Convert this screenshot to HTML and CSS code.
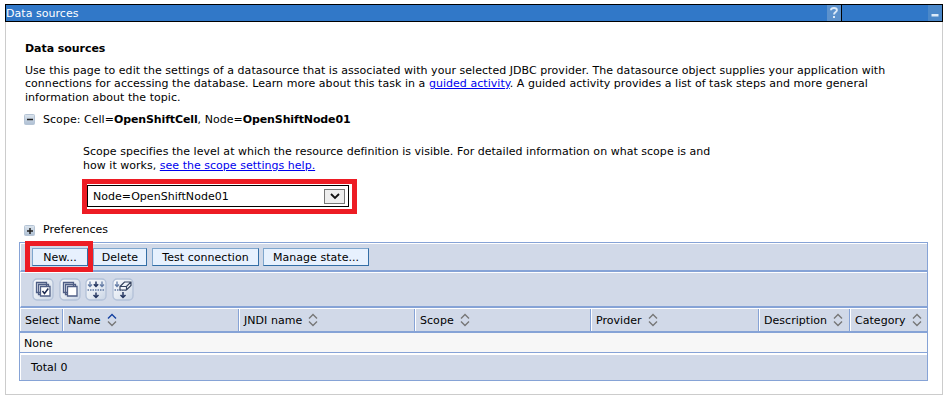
FILE: index.html
```html
<!DOCTYPE html>
<html lang="en">
<head>
<meta charset="utf-8">
<title>Data sources</title>
<link rel="stylesheet" href="styles.css">
</head>
<body>
<svg class="defs" aria-hidden="true">
  <defs>
    <linearGradient id="tile" x1="0" y1="0" x2="1" y2="1"><stop offset="0" stop-color="#fbfcfe"/><stop offset=".55" stop-color="#e4eaf2"/><stop offset="1" stop-color="#c8d4e5"/></linearGradient>
    <linearGradient id="box" x1="0" y1="0" x2="0" y2="1"><stop offset="0" stop-color="#dce5ee"/><stop offset="1" stop-color="#aebfd3"/></linearGradient>
    <g id="frame"><rect x="1" y="1" width="20" height="21" rx="4" fill="url(#tile)" stroke="#b3c1d8" stroke-width="1.3"/></g>
    <symbol id="sort" viewBox="0 0 10 14"><path class="up" d="M1 5.500 5 1.500l4 4"/><path class="down" d="m1 8.500 4 4 4-4"/></symbol>
  </defs>
</svg>
<main class="portlet">
  <header class="bar">
    <span class="bar-title">Data sources</span>
    <svg class="bar-icon" width="14" height="16" viewBox="0 0 14 16"><rect width="14" height="16" fill="#5c92cd"/><path d="M4 5.200C4 3.400 5.400 3 7 3s2.900.6 2.900 2.200C9.900 7 7 7 7 9.600" fill="none" stroke="#dceaf8" stroke-width="1.900"/><rect x="6" y="11" width="2" height="2" fill="#dceaf8"/></svg>
    <span class="bar-end"><svg class="bar-icon" width="14" height="16" viewBox="0 0 14 16"><rect width="14" height="16" fill="#4b88c9"/><rect x="3.500" y="9" width="7" height="2.500" fill="#dceaf8"/></svg></span>
  </header>
  <section class="content">
    <h1>Data sources</h1>
    <p class="intro">Use this page to edit the settings of a datasource that is associated with your selected JDBC provider. The datasource object supplies your application with<br>connections for accessing the database. Learn more about this task in a <a href="#">guided activity</a>. A guided activity provides a list of task steps and more general<br>information about the topic.</p>
    <div class="toggle">
      <svg width="11" height="11" viewBox="0 0 11 11"><rect x=".5" y=".5" width="10" height="10" rx="1" fill="url(#box)" stroke="#b5c4d5"/><path d="M3 5.500h6" stroke="#222" stroke-width="1.500"/></svg>
      <span>Scope: Cell=<b>OpenShiftCell</b>, Node=<b>OpenShiftNode01</b></span>
    </div>
    <p class="scope-help">Scope specifies the level at which the resource definition is visible. For detailed information on what scope is and<br>how it works, <a href="#">see the scope settings help.</a></p>
    <div class="select-mark"><div class="select"><span>Node=OpenShiftNode01</span><span class="drop"><svg width="10" height="7" viewBox="0 0 10 7"><path d="m1 1 4 4 4-4" fill="none" stroke="#111" stroke-width="1.800"/></svg></span></div></div>
    <div class="toggle prefs">
      <svg width="11" height="11" viewBox="0 0 11 11"><rect x=".5" y=".5" width="10" height="10" rx="1" fill="url(#box)" stroke="#b5c4d5"/><path d="M3 6h6M6 3v6" stroke="#222" stroke-width="1.500"/></svg>
      <span>Preferences</span>
    </div>
    <div class="table">
      <div class="row buttons">
        <button class="b-new">New...</button><button class="b-delete">Delete</button><button class="b-test">Test connection</button><button class="b-state">Manage state...</button>
        <span class="new-mark"></span>
      </div>
      <div class="row icons">
        <svg viewBox="0 0 22 23"><use href="#frame"/><g fill="#e8edf5" stroke="#4f5e85" stroke-width="1.300"><path d="M4.500 4.500h10v10h-10zM6.500 6.500h10v10h-10z"/><path d="M8.500 8.500h9.500v9.500h-9.500z" fill="#fff"/></g><path d="m10.500 13 2 2.500 3.800-5" fill="none" stroke="#1c2950" stroke-width="1.500"/></svg>
        <svg viewBox="0 0 22 23"><use href="#frame"/><g fill="#e8edf5" stroke="#4f5e85" stroke-width="1.300"><path d="M4.500 4.500h10v10h-10zM6.500 6.500h10v10h-10z"/><path d="M8.500 8.500h9.500v9.500h-9.500z" fill="#fff"/></g></svg>
        <svg viewBox="0 0 22 23"><use href="#frame"/><g fill="none" stroke="#637ba5" stroke-width="1.300"><path d="M5 3.500v5M3 6.500l2 2 2-2M17 3.500v5M15 6.500l2 2 2-2"/><path d="M2.500 12h17" stroke-dasharray="1.500 1"/><path d="M11 3.500v5M8.800 6.300l2.200 2.200 2.200-2.200M11 14.500v5M8.500 17l2.500 2.500 2.500-2.500" stroke="#263761" stroke-width="1.500"/></g></svg>
        <svg viewBox="0 0 22 23"><use href="#frame"/><g fill="none" stroke="#637ba5" stroke-width="1.300"><path d="M5 3.500v5M3 6.500l2 2 2-2"/><path d="M2.500 12h12" stroke-dasharray="1.500 1"/><path d="M11 14v5.500M8.500 17l2.500 2.500 2.500-2.500" stroke="#263761" stroke-width="1.500"/><path d="m8 8.500 4.500-4.500h6.500v3.500L14.500 12H8zM8 8.500h6.500L19 4M14.500 8.500V12" fill="#f4f6fa" stroke="#35435f" stroke-width="1.200"/></g></svg>
      </div>
      <div class="row head">
        <div>Select</div>
        <div>Name<svg class="sort asc"><use href="#sort"/></svg></div>
        <div>JNDI name<svg class="sort"><use href="#sort"/></svg></div>
        <div>Scope<svg class="sort"><use href="#sort"/></svg></div>
        <div>Provider<svg class="sort"><use href="#sort"/></svg></div>
        <div>Description<svg class="sort"><use href="#sort"/></svg></div>
        <div>Category<svg class="sort"><use href="#sort"/></svg></div>
      </div>
      <div class="none">None</div>
      <div class="row total">Total 0</div>
    </div>
  </section>
</main>
</body>
</html>
```
FILE: styles.css
```css
* { box-sizing: border-box; }
body { margin: 0; padding: 4px 5px 0; background: #fff; color: #000; font: 11px/13.4px Verdana, "DejaVu Sans", sans-serif; letter-spacing: .04px; white-space: nowrap; }
svg { display: block; flex: none; }
.defs { position: absolute; width: 0; height: 0; }
.portlet { width: 938px; height: 391px; border: 1px solid #ccc; border-top: 0; }
.bar { display: flex; align-items: stretch; height: 18px; margin: 0 -1px; border: 1px solid #000; background: #3178c8; color: #fff; }
.bar-title { flex: 1; line-height: 17px; }
.bar-end { display: flex; justify-content: flex-end; width: 101px; border-left: 1px solid #000; }
.content { padding: 20px 14px 0 13px; }
h1 { margin: 0 0 0 6px; font-size: 11px; line-height: 14px; letter-spacing: -.05px; }
b { letter-spacing: -.12px; }
p { margin: 0; }
a { color: #0000ee; }
.intro { margin: 8px 0 0 6px; }
.toggle { display: flex; align-items: center; gap: 8px; height: 14px; margin: 8px 0 0 5px; }
.scope-help { margin: 19px 0 0 64px; letter-spacing: .025px; }
.select-mark { width: 275px; height: 35px; margin: 7px 0 0 63px; border: 5px solid #ed1c24; padding: 1px 0 0; }
.select { display: flex; align-items: center; justify-content: space-between; width: 262px; height: 22px; border: 1px solid #000; padding: 0 3px 0 5px; }
.select > span:first-child { padding-top: 1px; }
.drop { display: flex; align-items: center; justify-content: center; width: 21px; height: 15px; border: 1px solid #777; background: #eee; }
.prefs { margin-top: 9px; }
.table { width: 909px; height: 139px; margin-top: 5px; border: 1px solid #86a3d6; }
.row { border-top: 1px solid #fff; border-left: 1px solid #fff; background: #d1d9e8; }
.buttons { position: relative; display: flex; height: 29px; border-bottom: 2px solid #86a3d6; padding: 4px 0 0 11px; }
button { height: 18px; margin: 0; padding: 1px 0 0; border: 1px solid #7ea6cd; border-right-color: #336ea6; border-bottom-color: #336ea6; background: #e7f1fe; color: #000; font: inherit; letter-spacing: inherit; }
.b-new { width: 56px; }
.b-delete { width: 54px; margin-left: 5px; }
.b-test { width: 107px; margin-left: 5px; }
.b-state { width: 106px; margin-left: 4px; }
.new-mark { position: absolute; left: 4px; top: -3px; width: 68px; height: 31px; border: 5px solid #ed1c24; }
.icons { display: flex; gap: 4.500px; height: 36px; border-bottom: 2px solid #86a3d6; padding: 5px 0 0 11px; }
.icons svg { width: 22px; height: 23px; }
.head { display: grid; grid-template-columns: 42px 176px 176px 176px 168px 91px 1fr; height: 25px; border-bottom: 2px solid #86a3d6; border-left: 0; }
.head div { display: flex; align-items: center; border-left: 1px solid #fff; padding: 1px 0 0 4px; box-shadow: -1px 0 #86a3d6; }
.head div:nth-child(n+2) { padding-left: 4px; margin-left: 1px; }
.sort { width: 10px; height: 14px; margin: -1px 0 0 6px; fill: none; stroke: #777; stroke-width: 1.400; }
.asc { --first: #1440a0; }
.up { stroke: var(--first, #777); }
.none { height: 20px; padding-left: 4px; background: #f7f7f7; line-height: 22px; }
.total { height: 27px; border-top: 0; box-shadow: inset 0 2px #fff, 0 -1px #86a3d6; padding-left: 10px; line-height: 30px; }
```
